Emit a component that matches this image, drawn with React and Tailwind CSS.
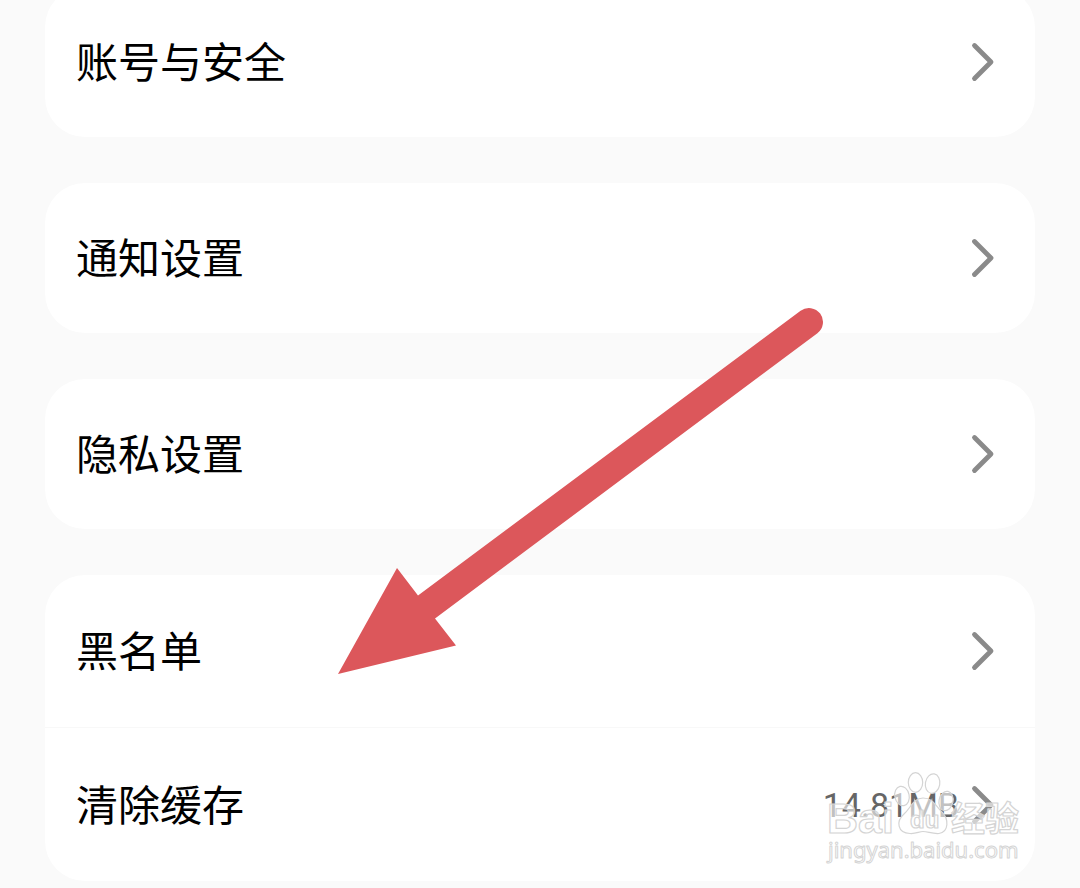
import React from 'react';

const groups = [
  [{ label: '账号与安全' }],
  [{ label: '通知设置' }],
  [{ label: '隐私设置' }],
  [{ label: '黑名单' }, { label: '清除缓存', value: '14.81MB' }],
];

function Chevron() {
  return (
    <svg className="w-6 h-10" viewBox="0 0 24 40" fill="none" aria-hidden="true">
      <path
        d="M3.500 3.500L20 20L3.500 36.500"
        stroke="#8a8a8a"
        strokeWidth="4.800"
        strokeLinecap="round"
        strokeLinejoin="round"
      />
    </svg>
  );
}

function SettingsRow({ label, value, grouped }) {
  return (
    <button
      type="button"
      className={`flex w-full items-center justify-between pl-[31px] pr-10 text-left ${
        grouped ? 'h-[153px]' : 'h-[150px]'
      }`}
    >
      <span className="pb-1 text-[42px] leading-[60px] text-black">{label}</span>
      <span className="flex items-center gap-3">
        {value && (
          <span className="font-[Roboto,sans-serif] text-[34px] leading-[40px] text-[#666666]">
            {value}
          </span>
        )}
        <Chevron />
      </span>
    </button>
  );
}

// Red arrow pointing at the blacklist row
function Arrow() {
  return (
    <svg
      className="pointer-events-none absolute left-[330px] top-[300px] h-[382px] w-[500px]"
      viewBox="0 0 500 382"
      aria-hidden="true"
    >
      <path
        d="M8 374L67 268L88 295.5L470.6 10.8A14 14 0 0 1 487.4 33.2L105 318.5L126 345.5Z"
        fill="#dc575b"
      />
    </svg>
  );
}

function Watermark() {
  return (
    <svg
      className="pointer-events-none absolute bottom-[18px] right-[50px] h-[100px] w-[210px]"
      viewBox="0 0 210 100"
      fill="#ffffff"
      fillOpacity="0.6"
      stroke="#d4d4d4"
      strokeWidth="1.2"
      strokeLinejoin="round"
      aria-hidden="true"
    >
      <ellipse cx="82" cy="26" rx="7.2" ry="9.8" transform="rotate(-12 82 26)" />
      <ellipse cx="95.5" cy="12.500" rx="7.2" ry="9.800" />
      <ellipse cx="112.5" cy="13.500" rx="7.2" ry="9.800" transform="rotate(10 112 14)" />
      <ellipse cx="126" cy="31" rx="7" ry="9.800" transform="rotate(12 126 31)" />
      <path d="M103 28C93 28 91 38 84 44C76 51 77 63 90 63.500C96 64 99 61.500 103 61.500C108 61.500 112 64 119 63.500C129 62 129 49 122 42C115 35 113 28 103 28Z" />
      <text x="7" y="63" fontSize="43" fontWeight="700" fontFamily="Liberation Sans, sans-serif">
        Bai
      </text>
      <text x="90" y="58" fontSize="24" fontWeight="700" fontFamily="Liberation Sans, sans-serif">
        du
      </text>
      <text x="131" y="61" fontSize="34" fontWeight="700" fontFamily="Noto Sans CJK SC, sans-serif">
        经验
      </text>
      <text x="8" y="88" fontSize="22" strokeWidth="1" fontFamily="Noto Sans, sans-serif">
        jingyan.baidu.com
      </text>
    </svg>
  );
}

function App() {
  return (
    <div className="relative min-h-screen overflow-hidden bg-[#fafafa] font-['Noto_Sans_CJK_SC',sans-serif]">
      <main className="-mt-[13px] flex flex-col gap-[46px] px-[45px]">
        {groups.map((rows) => (
          <section
            key={rows[0].label}
            className="divide-y divide-[#f8f8f8] overflow-hidden rounded-[40px] bg-white"
          >
            {rows.map((row) => (
              <SettingsRow
                key={row.label}
                label={row.label}
                value={row.value}
                grouped={rows.length > 1}
              />
            ))}
          </section>
        ))}
      </main>
      <Arrow />
      <Watermark />
    </div>
  );
}

export default App;
